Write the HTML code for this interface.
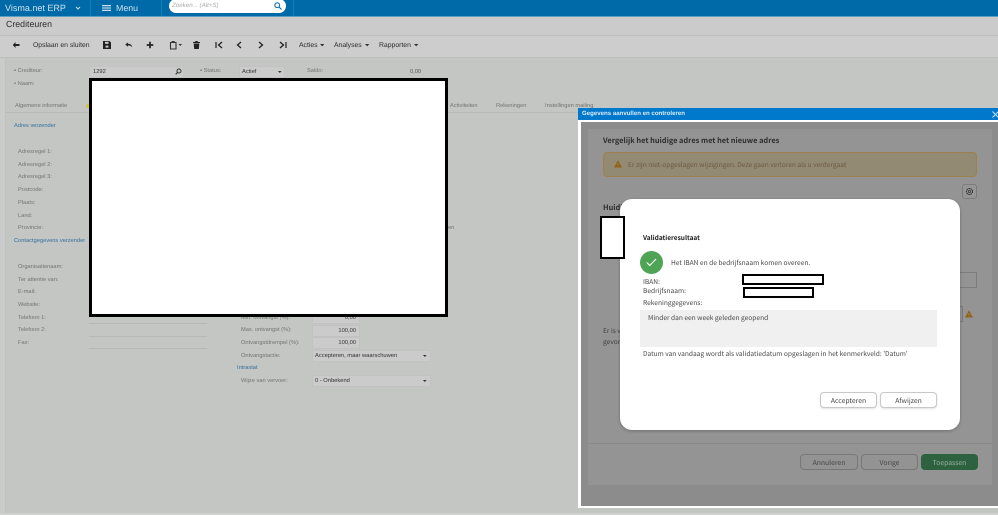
<!DOCTYPE html>
<html><head><meta charset="utf-8">
<style>
html,body{margin:0;padding:0;width:998px;height:515px;overflow:hidden;background:#c4c6c4}
body{position:relative;font-family:"Liberation Sans",sans-serif;text-rendering:geometricPrecision;filter:blur(.3px)}
.a{position:absolute}
.t{position:absolute;white-space:nowrap;line-height:10px}
.l{font-size:5.7px;color:#727472;margin-top:1px}
.b{font-size:5.7px;color:#2f6f9f;margin-top:1px}
.tb{font-size:6.84px;color:#2c2c2c;top:41px}
.inp{position:absolute;background:#cbcbcb;border:1px solid #c2c2c2;box-sizing:border-box;font-size:5.75px;color:#333;line-height:10px}
.m{font-family:"Noto Sans CJK SC","Liberation Sans",sans-serif}
.d{color:#4a4a4a;font-size:6.62px}
.btn{position:absolute;box-sizing:border-box;border-radius:4px;font-size:6.8px;text-align:center;line-height:13px}
.red{position:absolute;background:#fff;border:2.5px solid #000;box-sizing:border-box}
svg{position:absolute;overflow:visible}
</style></head><body>
<!-- header -->
<div class="a" style="left:0;top:0;width:998px;height:16px;background:#0069a8;border-bottom:1px solid #5f9dc0;box-sizing:content-box"></div>
<div class="t" style="left:5px;top:3px;font-size:9px;color:#cfe2ee">Visma.net ERP</div>
<svg style="left:75px;top:6px" width="6" height="4"><path d="M1 1l2 2 2-2" stroke="#cfe2ee" fill="none"/></svg>
<div class="a" style="left:90px;top:0;width:1px;height:16px;background:#1a7ab3"></div>
<svg style="left:102px;top:5px" width="9" height="6"><path d="M0 .7h9M0 3h9M0 5.3h9" stroke="#e4eef5" stroke-width="1.1"/></svg>
<div class="t" style="left:116px;top:3px;font-size:8.8px;color:#cfe2ee">Menu</div>
<div class="a" style="left:161px;top:0;width:1px;height:16px;background:#1a7ab3"></div>
<div class="a" style="left:169px;top:-1px;width:117px;height:14px;background:#fff;border-radius:7px"></div>
<div class="t" style="left:172px;top:1px;font-size:6.2px;font-style:italic;color:#aaa">Zoeken... (Alt+S)</div>
<svg style="left:274px;top:2px" width="8" height="8"><circle cx="3.2" cy="3.2" r="2.4" stroke="#0a72b5" stroke-width="1.1" fill="none"/><path d="M5 5l2.5 2.5" stroke="#0a72b5" stroke-width="1.2"/></svg>
<div class="a" style="left:293px;top:0;width:1px;height:16px;background:#1a7ab3"></div>
<!-- title -->
<div class="a" style="left:0;top:17px;width:998px;height:18px;background:#cbcbcb;border-bottom:1px solid #bfbfbf"></div>
<div class="t" style="left:6px;top:19px;font-size:8.8px;color:#2c2c2c">Crediteuren</div>
<!-- toolbar -->
<div class="a" style="left:0;top:36px;width:998px;height:21px;background:#cdcdcd;border-bottom:1px solid #bebebe"></div>
<svg style="left:12px;top:41px" width="8" height="8"><path d="M3.5 1L.8 4l2.700 3V5h4V3h-4z" fill="#222"/></svg>
<div class="t tb" style="left:33px">Opslaan en sluiten</div>
<svg style="left:103px;top:41px" width="8" height="8"><path d="M0 0h6.500L8 1.500V8H0z" fill="#222"/><rect x="2" y=".8" width="3.600" height="2" fill="#ccc"/><rect x="2.600" y="4.600" width="2.800" height="2" fill="#ccc"/></svg>
<svg style="left:125px;top:41px" width="8" height="8"><path d="M3 1.500L.2 3.500 3 5.800V4.400c1.800 0 3.200.5 4.400 2C7 4 5.500 2.800 3 2.700z" fill="#222"/></svg>
<svg style="left:146px;top:41px" width="8" height="8"><path d="M4 .7v6.600M.7 4h6.600" stroke="#222" stroke-width="1.700"/></svg>
<svg style="left:169px;top:40px" width="14" height="10"><path d="M1.500 2.500h5.500v6.500H1.500z" fill="none" stroke="#333" stroke-width="1.100"/><rect x="2.700" y="1" width="3" height="2" fill="#333"/><path d="M9.500 4h3.500L11.200 6z" fill="#333"/></svg>
<svg style="left:193px;top:41px" width="7" height="8"><path d="M2.500 0h2L5 1h2v1H0V1h2zM.7 2.500h5.600L5.800 8H1.200z" fill="#222"/></svg>
<svg style="left:215px;top:41px" width="8" height="8"><path d="M1 1v6" stroke="#222" stroke-width="1.200"/><path d="M7 1L3.500 4 7 7" stroke="#222" stroke-width="1.300" fill="none"/></svg>
<svg style="left:236px;top:41px" width="6" height="8"><path d="M5 1L1.500 4 5 7" stroke="#222" stroke-width="1.300" fill="none"/></svg>
<svg style="left:258px;top:41px" width="6" height="8"><path d="M1 1l3.500 3L1 7" stroke="#222" stroke-width="1.300" fill="none"/></svg>
<svg style="left:279px;top:41px" width="8" height="8"><path d="M7 1v6" stroke="#222" stroke-width="1.200"/><path d="M1 1l3.500 3L1 7" stroke="#222" stroke-width="1.300" fill="none"/></svg>
<div class="t tb" style="left:299px">Acties</div><svg style="left:320px;top:44px" width="5" height="3"><path d="M0 0h4.400L2.200 2.400z" fill="#333"/></svg>
<div class="t tb" style="left:334px">Analyses</div><svg style="left:365px;top:44px" width="5" height="3"><path d="M0 0h4.400L2.200 2.400z" fill="#333"/></svg>
<div class="t tb" style="left:379px">Rapporten</div><svg style="left:414px;top:44px" width="5" height="3"><path d="M0 0h4.400L2.200 2.400z" fill="#333"/></svg>
<!-- content -->
<div class="a" style="left:0;top:58px;width:5px;height:457px;background:#cbcbcb;border-right:1px solid #bfc1bf"></div>
<div class="a" style="left:0;top:513px;width:998px;height:2px;background:#cfd1cf"></div>
<div class="t l" style="left:14px;top:65px">▪ Crediteur:</div>
<div class="t l" style="left:14px;top:78px">▪ Naam:</div>
<div class="inp" style="left:89px;top:66px;width:95px;height:12px;padding:0 3px;border-color:#c4c4c4">1292</div>
<svg style="left:175px;top:68px" width="7" height="7"><circle cx="4" cy="3" r="2" stroke="#333" fill="none"/><path d="M2.500 4.500L.7 6.300" stroke="#333" stroke-width="1.100"/></svg>
<div class="t l" style="left:200px;top:65px">▪ Status:</div>
<div class="inp" style="left:239px;top:66px;width:46px;height:12px;padding:0 2px">Actief</div>
<svg style="left:278px;top:71px" width="4" height="3"><path d="M0 0h3.600L1.800 2z" fill="#333"/></svg>
<div class="t l" style="left:307px;top:65px">Saldo:</div>
<div class="t l" style="left:410px;top:66px;color:#555">0,00</div>
<div class="t l" style="left:15px;top:100px">Algemene informatie</div>
<div class="a" style="left:86px;top:104px;width:4px;height:4px;background:#d8c62c;border-radius:50%"></div>
<div class="t l" style="left:450px;top:100px">Activiteiten</div>
<div class="t l" style="left:496px;top:100px">Rekeningen</div>
<div class="t l" style="left:545px;top:100px">Instellingen mailing</div>
<div class="a" style="left:5px;top:112px;width:575px;height:1px;background:#babcba"></div>
<div class="t b" style="left:14px;top:120px">Adres verzender</div>
<div class="t l" style="left:18px;top:146px">Adresregel 1:</div>
<div class="t l" style="left:18px;top:159px">Adresregel 2:</div>
<div class="t l" style="left:18px;top:171px">Adresregel 3:</div>
<div class="t l" style="left:18px;top:184px">Postcode:</div>
<div class="t l" style="left:18px;top:197px">Plaats:</div>
<div class="t l" style="left:18px;top:210px">Land:</div>
<div class="t l" style="left:18px;top:222px">Provincie:</div>
<div class="t b" style="left:14px;top:235px">Contactgegevens verzender</div>
<div class="t l" style="left:18px;top:261px">Organisatienaam:</div>
<div class="t l" style="left:18px;top:274px">Ter attentie van:</div>
<div class="t l" style="left:18px;top:286px">E-mail:</div>
<div class="t l" style="left:18px;top:299px">Website:</div>
<div class="t l" style="left:18px;top:312px">Telefoon 1:</div>
<div class="t l" style="left:18px;top:324px">Telefoon 2:</div>
<div class="t l" style="left:18px;top:337px">Fax:</div>
<div class="a" style="left:89px;top:323px;width:118px;height:1px;background:#b8bab8"></div>
<div class="a" style="left:89px;top:336px;width:118px;height:1px;background:#b8bab8"></div>
<div class="a" style="left:89px;top:348px;width:118px;height:1px;background:#b8bab8"></div>
<div class="t l" style="left:448px;top:222px">en</div>
<div class="t l" style="left:241px;top:312px">Min. ontvangst (%):</div>
<div class="t l" style="left:241px;top:324px">Max. ontvangst (%):</div>
<div class="t l" style="left:241px;top:337px">Ontvangstdrempel (%):</div>
<div class="t l" style="left:241px;top:350px">Ontvangstactie:</div>
<div class="t b" style="left:237px;top:362px">Intrastat</div>
<div class="t l" style="left:241px;top:375px">Wijze van vervoer:</div>
<div class="inp" style="left:312px;top:312px;width:48px;height:12px;text-align:right;padding-right:3px">0,00</div>
<div class="inp" style="left:312px;top:325px;width:48px;height:12px;text-align:right;padding-right:3px">100,00</div>
<div class="inp" style="left:312px;top:337px;width:48px;height:12px;text-align:right;padding-right:3px">100,00</div>
<div class="inp" style="left:312px;top:350px;width:119px;height:12px;padding:0 2px">Accepteren, maar waarschuwen</div>
<svg style="left:423px;top:355px" width="4" height="3"><path d="M0 0h3.600L1.800 2z" fill="#333"/></svg>
<div class="inp" style="left:312px;top:375px;width:119px;height:12px;padding:0 2px">0 - Onbekend</div>
<svg style="left:423px;top:380px" width="4" height="3"><path d="M0 0h3.600L1.800 2z" fill="#333"/></svg>
<!-- big redaction -->
<div class="red" style="left:89px;top:78px;width:359px;height:239px;border-width:3px"></div>
<!-- modal -->
<div class="a" style="left:578px;top:108px;width:420px;height:12px;background:#0078cc"></div>
<div class="t" style="left:582px;top:109px;font-size:6.1px;font-weight:bold;color:#dcecf7">Gegevens aanvullen en controleren</div>
<svg style="left:992px;top:111px" width="7" height="7"><path d="M.5.5l6 6M6.500.5l-6 6" stroke="#cfe4f4" stroke-width=".9"/></svg>
<div class="a" style="left:578px;top:120px;width:420px;height:388px;background:#fff"></div>
<div class="a" style="left:581px;top:122px;width:417px;height:384px;background:#8c8c8c"></div>
<div class="a" style="left:588px;top:129px;width:404px;height:356px;background:#949494"></div>
<div class="a" style="left:588px;top:443px;width:404px;height:1px;background:#8a8a8a"></div>
<div class="t m" style="left:603px;top:136px;font-size:7.4px;font-weight:bold;color:#2e2e2e">Vergelijk het huidige adres met het nieuwe adres</div>
<div class="a" style="left:603px;top:152px;width:374px;height:25px;background:#938a74;border:1px solid #a0814e;border-radius:4px;box-sizing:border-box"></div>
<svg style="left:614px;top:160px" width="8" height="8"><path d="M4 .3L7.900 7.500H.1z" fill="#94600f"/><path d="M4 3v2.400M4 6v.8" stroke="#938a74" stroke-width=".8"/></svg>
<div class="t m" style="left:628px;top:159px;font-size:6.62px;color:#6b5a3d">Er zijn niet-opgeslagen wijzigingen. Deze gaan verloren als u verdergaat</div>
<div class="a" style="left:962px;top:184px;width:15px;height:15px;background:#969696;border:1px solid #7c7c7c;border-radius:3px;box-sizing:border-box"></div>
<svg style="left:965px;top:187px" width="9" height="9"><circle cx="4.500" cy="4.500" r="3" stroke="#333" stroke-width="1.100" fill="none" stroke-dasharray="1.600 .5"/><circle cx="4.500" cy="4.500" r="1.200" fill="none" stroke="#333" stroke-width=".7"/></svg>
<div class="t m" style="left:603px;top:203px;font-size:7.4px;font-weight:bold;color:#2e2e2e">Huidi</div>
<div class="t m" style="left:603px;top:325px;font-size:6.62px;color:#3f3f3f">Er is v</div>
<div class="t m" style="left:603px;top:336px;font-size:6.62px;color:#3f3f3f">gevor</div>
<div class="a" style="left:950px;top:272px;width:27px;height:16px;border:1px solid #7c7c7c;box-sizing:border-box"></div>
<div class="a" style="left:950px;top:306px;width:13px;height:16px;border:1px solid #7c7c7c;border-left:0;box-sizing:border-box"></div>
<svg style="left:965px;top:310px" width="8" height="8"><path d="M4 .3L7.900 7.500H.1z" fill="#94600f"/><path d="M4 3v2.400M4 6v.8" stroke="#949494" stroke-width=".8"/></svg>
<div class="btn m" style="left:800px;top:454px;width:58px;height:16px;border:1px solid #777;background:#939393;color:#444;line-height:14px">Annuleren</div>
<div class="btn m" style="left:861px;top:454px;width:57px;height:16px;border:1px solid #777;background:#939393;color:#444;line-height:14px">Vorige</div>
<div class="btn m" style="left:921px;top:454px;width:57px;height:16px;background:#2e6140;color:#9bb3a3;line-height:16px">Toepassen</div>
<!-- dialog -->
<div class="a" style="left:620px;top:199px;width:340px;height:231px;background:#fff;border-radius:12px;box-shadow:0 1px 3px rgba(0,0,0,.25)"></div>
<div class="red" style="left:600px;top:216px;width:25px;height:43px"></div>
<div class="t m" style="left:643px;top:232px;font-size:6.5px;font-weight:bold;color:#222">Validatieresultaat</div>
<div class="a" style="left:640px;top:251px;width:23px;height:23px;border-radius:50%;background:#4ea355"></div>
<svg style="left:646px;top:258px" width="11" height="9"><path d="M.8 4.500l3 3L10 1" stroke="#fff" stroke-width="1.100" fill="none"/></svg>
<div class="t m d" style="left:671px;top:257px">Het IBAN en de bedrijfsnaam komen overeen.</div>
<div class="t m d" style="left:643px;top:276px">IBAN:</div>
<div class="t m d" style="left:643px;top:285px">Bedrijfsnaam:</div>
<div class="t m d" style="left:643px;top:297px">Rekeninggegevens:</div>
<div class="red" style="left:742px;top:274px;width:82px;height:11px"></div>
<div class="red" style="left:743px;top:287px;width:71px;height:11px"></div>
<div class="a" style="left:640px;top:310px;width:297px;height:37px;background:#f0f0f0"></div>
<div class="t m d" style="left:648px;top:312px">Minder dan een week geleden geopend</div>
<div class="t m d" style="left:643px;top:348px">Datum van vandaag wordt als validatiedatum opgeslagen in het kenmerkveld: 'Datum'</div>
<div class="btn m" style="left:820px;top:392px;width:57px;height:16px;background:#fff;border:1px solid #c8c8c8;color:#444;line-height:14px;box-shadow:0 1px 2px rgba(0,0,0,.12)">Accepteren</div>
<div class="btn m" style="left:880px;top:392px;width:57px;height:16px;background:#fff;border:1px solid #c8c8c8;color:#444;line-height:14px;box-shadow:0 1px 2px rgba(0,0,0,.12)">Afwijzen</div>
</body></html>
